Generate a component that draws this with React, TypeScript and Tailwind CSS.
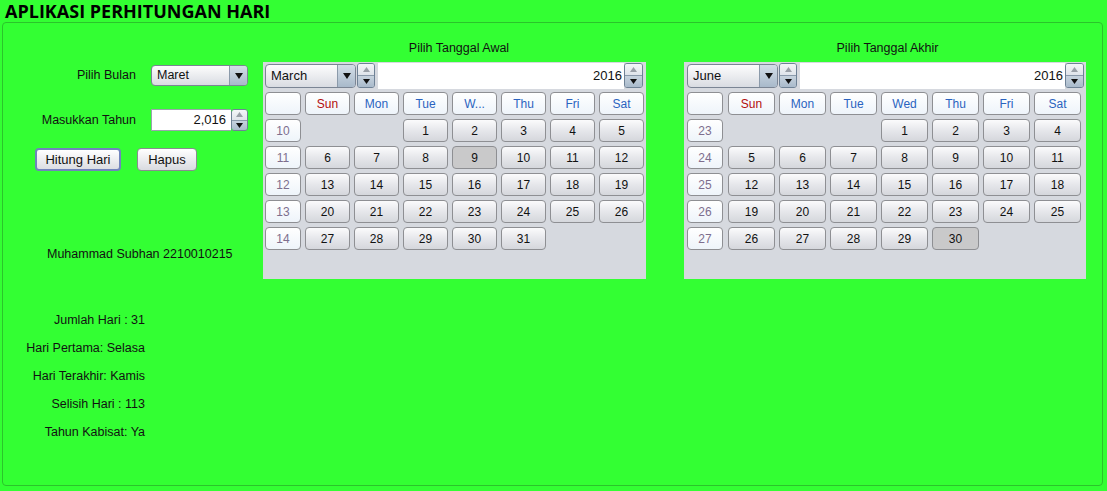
import type { ReactNode } from "react";

type Kind = "blank" | "head" | "sun" | "week" | "day" | "sel";

const cal1 = {
  month: "March",
  wed: "W...",
  weeks: [10, 11, 12, 13, 14],
  start: 2,
  days: 31,
  sel: 9,
  colW: "w-[45px]",
  padL: "pl-[2px]",
  gapWeek: "gap-[4px]",
};

const cal2 = {
  month: "June",
  wed: "Wed",
  weeks: [23, 24, 25, 26, 27],
  start: 3,
  days: 30,
  sel: 30,
  colW: "w-[47px]",
  padL: "pl-[3px]",
  gapWeek: "gap-[5px]",
};

function Cell({ kind, w, children }: { kind: Kind; w: string; children?: ReactNode }) {
  const base = `${w} h-[23px] shrink-0 rounded-[4px] border flex items-center justify-center text-[12px]`;
  if (kind === "blank") return <div className={`${w} h-[23px] shrink-0`} />;
  if (kind === "head" || kind === "sun" || kind === "week") {
    const color = kind === "sun" ? "text-[#b30d0d]" : kind === "week" ? "text-[#7d6e8e]" : "text-[#2a63bf]";
    return (
      <div className={`${base} border-[#8e8f93] bg-linear-to-b from-[#ffffff] to-[#eef4fa] ${color}`}>{children}</div>
    );
  }
  if (kind === "sel") {
    return <div className={`${base} border-[#8e8f93] bg-[#c9c9ca] text-[#111]`}>{children}</div>;
  }
  return (
    <div className={`${base} border-[#8e8f93] bg-linear-to-b from-[#fbfbfc] via-[#e6e7eb] to-[#d5d7dc] text-[#111]`}>
      {children}
    </div>
  );
}

function Arrow({ up, dark }: { up?: boolean; dark?: boolean }) {
  return (
    <svg width="7" height="5" viewBox="0 0 7 5">
      <path d={up ? "M0 5 L3.5 0 L7 5 Z" : "M0 0 L3.5 5 L7 0 Z"} fill={dark ? "#111" : "#9aa0a8"} />
    </svg>
  );
}

function Spin({ w, h }: { w: string; h: string }) {
  return (
    <div className={`${w} ${h} shrink-0 flex flex-col rounded-[3px] border border-[#6f8296] overflow-hidden`}>
      <div className="flex-1 flex items-center justify-center bg-linear-to-b from-[#f4f6f8] to-[#dfe4ea] border-b border-[#8a9aab]">
        <Arrow up />
      </div>
      <div className="flex-1 flex items-center justify-center bg-linear-to-b from-[#c7d3de] to-[#a9bacb]">
        <Arrow dark />
      </div>
    </div>
  );
}

function Combo({ label, w, h, text }: { label: string; w: string; h: string; text: string }) {
  return (
    <div className={`${w} ${h} shrink-0 flex rounded-[4px] border border-[#7b8594] overflow-hidden bg-linear-to-b from-[#fdfdfd] to-[#d9dce2]`}>
      <div className={`flex-1 flex items-center pl-[5px] ${text} text-[#111]`}>{label}</div>
      <div className="w-[18px] flex items-center justify-center border-l border-[#8b9aaa] bg-linear-to-b from-[#d4dee8] to-[#a8b9ca]">
        <svg width="8" height="6" viewBox="0 0 8 6">
          <path d="M0 0 L4 6 L8 0 Z" fill="#111" />
        </svg>
      </div>
    </div>
  );
}

function Calendar({ c, width, fieldW }: { c: typeof cal1; width: string; fieldW: string }) {
  const heads: [Kind, string][] = [
    ["sun", "Sun"],
    ["head", "Mon"],
    ["head", "Tue"],
    ["head", c.wed],
    ["head", "Thu"],
    ["head", "Fri"],
    ["head", "Sat"],
  ];
  const rows: (number | null)[][] = c.weeks.map((_, r) =>
    Array.from({ length: 7 }, (_, i) => {
      const d = r * 7 + i - c.start + 1;
      return d >= 1 && d <= c.days ? d : null;
    })
  );
  return (
    <div className={`${width} h-[217px] bg-[#d6d9df] flex flex-col`}>
      <div className={`h-[27px] flex items-center ${c.padL} pr-[2px]`}>
        <Combo label={c.month} w="w-[91px]" h="h-[24px]" text="text-[13px]" />
        <div className="ml-[1px]">
          <Spin w="w-[18px]" h="h-[25px]" />
        </div>
        <div className={`${fieldW} h-[26px] ml-[3px] bg-white flex items-center justify-end pr-[2px] text-[13px] text-[#111]`}>
          2016
        </div>
        <Spin w="w-[19px]" h="h-[25px]" />
      </div>
      <div className={`pt-[3px] ${c.padL} flex ${c.gapWeek}`}>
        <div className="flex flex-col gap-[4px]">
          <Cell kind="head" w="w-[36px]" />
          {c.weeks.map((wk) => (
            <Cell key={wk} kind="week" w="w-[36px]">
              {wk}
            </Cell>
          ))}
        </div>
        <div className="flex flex-col gap-[4px]">
          <div className="flex gap-[4px]">
            {heads.map(([k, t]) => (
              <Cell key={t} kind={k} w={c.colW}>
                {t}
              </Cell>
            ))}
          </div>
          {rows.map((row, r) => (
            <div key={r} className="flex gap-[4px]">
              {row.map((d, i) =>
                d === null ? (
                  <Cell key={i} kind="blank" w={c.colW} />
                ) : (
                  <Cell key={i} kind={d === c.sel ? "sel" : "day"} w={c.colW}>
                    {d}
                  </Cell>
                )
              )}
            </div>
          ))}
        </div>
      </div>
    </div>
  );
}

export default function App() {
  const results = [
    "Jumlah Hari : 31",
    "Hari Pertama: Selasa",
    "Hari Terakhir: Kamis",
    "Selisih Hari : 113",
    "Tahun Kabisat: Ya",
  ];

  return (
    <div className="w-[1107px] h-[491px] bg-[#33ff33] font-['Liberation_Sans',Arial,sans-serif] text-[12.5px] text-[#111] overflow-hidden">
      <div className="h-[22px] pl-[5px] flex items-center font-['Open_Sans',sans-serif] font-bold text-[18px] leading-none text-black">
        APLIKASI PERHITUNGAN HARI
      </div>

      <div className="ml-[2px] w-[1101px] h-[464px] border border-[#2bc42b] rounded-[4px] flex">
        {/* form column */}
        <div className="w-[260px] shrink-0 flex flex-col">
          <div className="mt-[42px] flex items-center">
            <div className="w-[133px] text-right">Pilih Bulan</div>
            <div className="ml-[15px]">
              <Combo label="Maret" w="w-[97px]" h="h-[21px]" text="text-[12.5px]" />
            </div>
          </div>

          <div className="mt-[23px] flex items-center">
            <div className="w-[133px] text-right">Masukkan Tahun</div>
            <div className="ml-[15px] w-[97px] h-[22px] flex">
              <div className="flex-1 bg-white border border-[#9aa3ad] border-r-0 flex items-center justify-end pr-[5px] text-[13px]">
                2,016
              </div>
              <Spin w="w-[17px]" h="h-[22px]" />
            </div>
          </div>

          <div className="mt-[17px] pl-[32px] flex gap-[16px]">
            <div className="w-[86px] h-[23px] rounded-[4px] border-2 border-[#7184bd] bg-linear-to-b from-[#ffffff] to-[#dcdee3] flex items-center justify-center text-[13px]">
              Hitung Hari
            </div>
            <div className="w-[60px] h-[23px] rounded-[4px] border border-[#8a8c90] bg-linear-to-b from-[#ffffff] to-[#d9dbe0] flex items-center justify-center text-[13px]">
              Hapus
            </div>
          </div>

          <div className="mt-[76px] pl-[44px] leading-[14px]">Muhammad Subhan 2210010215</div>

          <div className="mt-[52px] w-[142px] flex flex-col gap-[14px] text-right leading-[14px]">
            {results.map((r) => (
              <div key={r}>{r}</div>
            ))}
          </div>
        </div>

        {/* start date */}
        <div className="w-[383px] shrink-0 flex flex-col">
          <div className="mt-[18px] h-[21px] pl-[9px] text-center leading-[14px]">Pilih Tanggal Awal</div>
          <Calendar c={cal1} width="w-[383px]" fieldW="w-[246px]" />
        </div>

        <div className="w-[38px] shrink-0" />

        {/* end date */}
        <div className="w-[402px] shrink-0 flex flex-col">
          <div className="mt-[18px] h-[21px] pl-[5px] text-center leading-[14px]">Pilih Tanggal Akhir</div>
          <Calendar c={cal2} width="w-[402px]" fieldW="w-[266px]" />
        </div>
      </div>
    </div>
  );
}
